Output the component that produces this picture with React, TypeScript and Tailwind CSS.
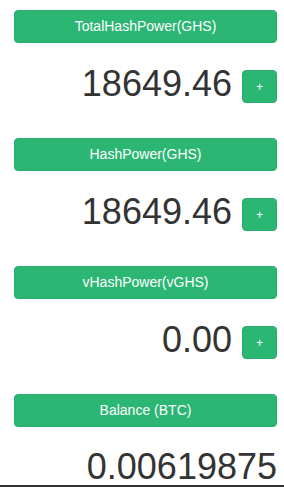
import React from 'react';

type Stat = { label: string; value: string; add?: boolean };

const stats: Stat[] = [
  { label: 'TotalHashPower(GHS)', value: '18649.46', add: true },
  { label: 'HashPower(GHS)', value: '18649.46', add: true },
  { label: 'vHashPower(vGHS)', value: '0.00', add: true },
  { label: 'Balance (BTC)', value: '0.00619875' },
];

const App: React.FC = () => {
  return (
    <div className="w-[284px] h-[487px] overflow-hidden bg-white font-['Liberation_Sans',Arial,sans-serif]">
      <div className="pt-[10px] pl-[14px] pr-[7px]">
        {stats.map((s, i) => (
          <div key={s.label} className={i > 0 ? 'mt-[35px]' : ''}>
            <div className="h-[33px] flex items-center justify-center rounded-[4px] border border-[#29ab6b] bg-[#2bb673] text-white text-[14px]">
              {s.label}
            </div>
            <div className={`flex justify-end items-start ${s.add ? 'mt-[23px]' : 'mt-[22px]'}`}>
              <span className="text-[36px] leading-[36px] text-[#333]">{s.value}</span>
              {s.add && (
                <button className="ml-[10px] mt-[4px] h-[33px] w-[35px] flex items-center justify-center rounded-[4px] border border-[#29ab6b] bg-[#2bb673] text-white text-[12px]">
                  +
                </button>
              )}
            </div>
          </div>
        ))}
      </div>
      <div className="h-[2px] bg-[#333]" />
    </div>
  );
};

export default App;
